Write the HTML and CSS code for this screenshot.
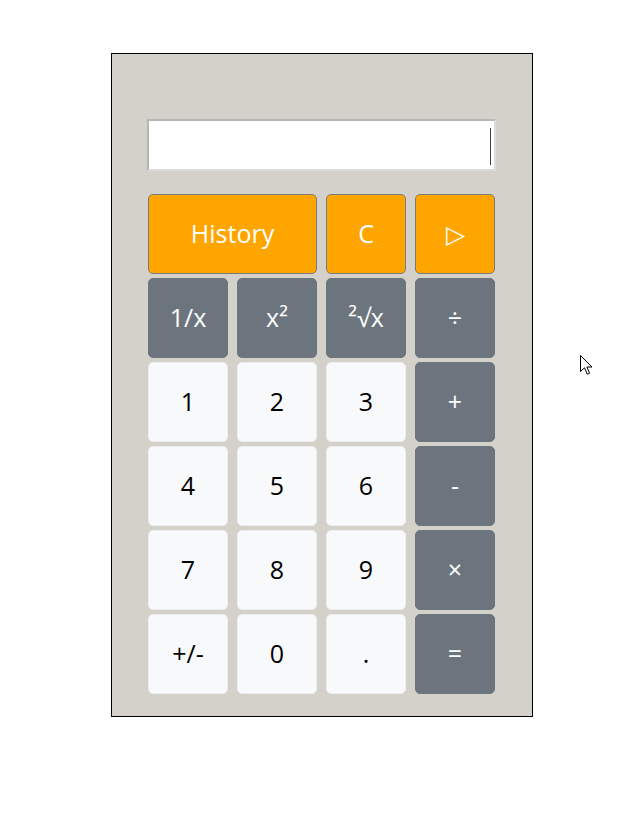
FILE: index.html
```html
<!DOCTYPE html>
<html>
<head>
<meta charset="utf-8">
<link rel="stylesheet" href="styles.css">
</head>
<body>
<div class="calc">
  <div class="display"><span class="caret"></span></div>
  <div class="keys">
    <button class="key orange wide">History</button>
    <button class="key orange">C</button>
    <button class="key orange">▷</button>
    <button class="key gray">1/x</button>
    <button class="key gray">x²</button>
    <button class="key gray">²√x</button>
    <button class="key gray">÷</button>
    <button class="key light">1</button>
    <button class="key light">2</button>
    <button class="key light">3</button>
    <button class="key gray">+</button>
    <button class="key light">4</button>
    <button class="key light">5</button>
    <button class="key light">6</button>
    <button class="key gray">-</button>
    <button class="key light">7</button>
    <button class="key light">8</button>
    <button class="key light">9</button>
    <button class="key gray">×</button>
    <button class="key light">+/-</button>
    <button class="key light">0</button>
    <button class="key light">.</button>
    <button class="key gray">=</button>
  </div>
</div>
<svg class="pointer" width="14" height="22" viewBox="0 0 14 22">
  <path d="M0.5 0.5 L0.5 16.5 L4.5 12.8 L7.3 19.2 L9.6 18.2 L6.9 12 L12 12 Z" fill="#fff" stroke="#000" stroke-width="1" stroke-linejoin="miter"/>
</svg>
</body>
</html>
```
FILE: styles.css
```css
html, body {
  margin: 0;
  padding: 0;
  background: #ffffff;
}
body {
  font-family: "Open Sans", "Noto Sans", "Liberation Sans", sans-serif;
  position: relative;
  width: 625px;
  height: 831px;
}
.calc {
  box-sizing: border-box;
  width: 422px;
  height: 664px;
  margin: 53px 0 0 111px;
  border: 1px solid #000;
  background: #d4d1ca;
  padding: 65px 0 0 35px;
  display: flex;
  flex-direction: column;
}
.display {
  box-sizing: border-box;
  width: 349px;
  height: 52px;
  background: #fff;
  border-style: solid;
  border-width: 2px;
  border-color: #b6b6b6 #dcdcdc #dcdcdc #b6b6b6;
  display: flex;
  justify-content: flex-end;
  align-items: center;
  padding-right: 3px;
}
.caret {
  width: 1px;
  height: 37px;
  background: #404040;
  margin-top: 2px;
}
.keys {
  margin-top: 23px;
  margin-left: 1px;
  display: grid;
  grid-template-columns: repeat(4, 80px);
  grid-auto-rows: 80px;
  column-gap: 9px;
  row-gap: 4px;
}
.key {
  box-sizing: border-box;
  font-family: "Open Sans", "Noto Sans", "Liberation Sans", sans-serif;
  font-size: 25px;
  border-radius: 5px;
  display: flex;
  align-items: center;
  justify-content: center;
  padding: 0 0 2px 0;
  margin: 0;
}
.wide {
  grid-column: span 2;
}
.orange {
  background: #ffa500;
  color: #fff;
  border: 1px solid #7a7a7a;
}
.gray {
  background: #6c757d;
  color: #fff;
  border: 1px solid #6c757d;
}
.light {
  background: #f8f9fa;
  color: #000;
  border: 1px solid #eceded;
}
.pointer {
  position: absolute;
  left: 580px;
  top: 355px;
}
```
